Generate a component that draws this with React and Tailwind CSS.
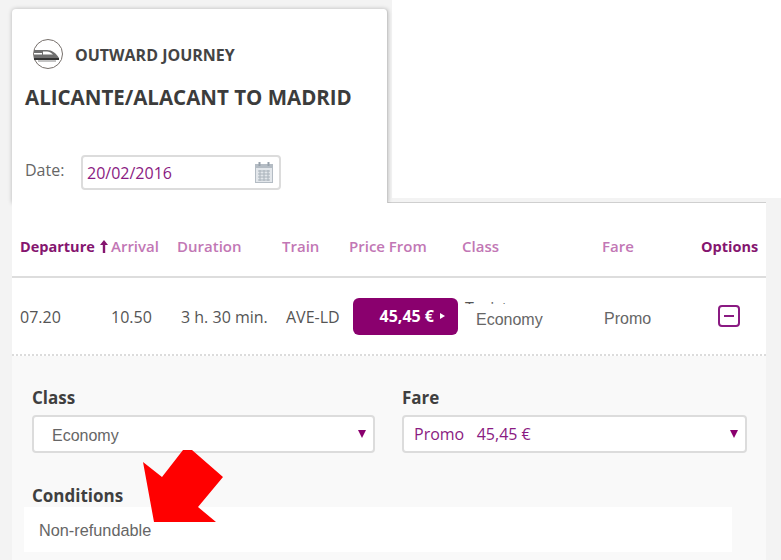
import React from "react";

const HEAD = "text-[15px] font-semibold text-[#c277b5]";
const ROW = "text-[16px] text-[#555] mt-[2px]";
const LABEL = "text-[17px] font-bold text-[#3f3f3f] leading-[20px]";
const COLS = "grid grid-cols-[91px_66px_105px_67px_113px_140px_99px_1fr] items-center pl-2 bg-white";

function TrainIcon() {
  return (
    <svg width="32" height="32" viewBox="0 0 32 32" fill="none">
      <circle cx="16" cy="16" r="14.5" stroke="#77706c" strokeWidth="1" />
      <path d="M2 12h13c5 0 9 3 12 8H2z" fill="#6f6f6f" />
      <path d="M11 13.5h4c2 0 4 1 6 3h-10z" fill="#fff" />
      <path d="M2 15h8v1.5H2z" fill="#fff" />
      <path d="M2 20h25v2H2z" fill="#333" />
      <path d="M6 23h18" stroke="#888" strokeWidth="1" />
    </svg>
  );
}

function CalendarIcon() {
  return (
    <svg width="18" height="21" viewBox="0 0 18 21">
      <rect x="0.5" y="2.5" width="17" height="18" fill="#e3e7eb" stroke="#b4bcc4" />
      <rect x="0" y="2" width="18" height="4" fill="#b4bcc4" />
      <rect x="3.5" y="0" width="2" height="4" fill="#98a2ac" />
      <rect x="12.5" y="0" width="2" height="4" fill="#98a2ac" />
      <path d="M3 9h12M3 12h12M3 15h12M3 18h12M5 8v11M9 8v11M13 8v11" stroke="#a9b2ba" strokeWidth="1" />
    </svg>
  );
}

function SortArrow() {
  return (
    <svg width="8" height="13" viewBox="0 0 8 13" fill="#85156f">
      <path d="M4 0L8 5H5.2V13H2.8V5H0z" />
    </svg>
  );
}

function SelectCaret() {
  return <span className="w-0 h-0 border-x-[4px] border-x-transparent border-t-[8px] border-t-[#8a006e]" />;
}

export default function App() {
  return (
    <div className="relative w-[781px] h-[560px] overflow-hidden bg-[#f3f3f3] font-['Open_Sans',sans-serif]">
      <div className="flex h-[203px]">
        <div className="relative z-10 w-[376px] h-[194px] ml-3 mt-[9px] bg-white rounded-t-[4px] shadow-[0_0_4px_rgba(0,0,0,0.25)] border-r border-[#c9c9c9] pl-[13px] pt-[29px]">
          <div className="flex items-center h-8 pl-[7px] gap-[12px]">
            <TrainIcon />
            <span className="text-[16px] font-bold text-[#444] -ml-px mt-[2px]">OUTWARD JOURNEY</span>
          </div>
          <h1 className="mt-[14px] text-[20.5px] font-bold text-[#3c3c3c] leading-[26px]">ALICANTE/ALACANT TO MADRID</h1>
          <div className="flex items-center mt-[45px]">
            <span className="text-[16px] text-[#666] w-[56px] -mt-[6px]">Date:</span>
            <div className="flex items-center justify-between w-[200px] h-[35px] bg-white rounded-[4px] border-2 border-[#dcdcdc] pl-[4px] pr-[6px]">
              <span className="text-[16px] text-[#8a1a82]">20/02/2016</span>
              <CalendarIcon />
            </div>
          </div>
        </div>
        <div className="flex-1 flex flex-col">
          <div className="ml-1 h-[198px] bg-white" />
          <div className="w-[378px] h-[5px] border-b border-[#cfcfcf]" />
        </div>
      </div>

      <div className="relative z-20 ml-3 w-[754px] h-[357px] bg-[#f9f9f9]">
        <div className={`${COLS} h-[75px] border-b-2 border-[#dddddd] pt-[14px]`}>
          <span className="flex items-center gap-[5px] text-[14.5px] font-bold text-[#85156f] whitespace-nowrap">
            Departure <SortArrow />
          </span>
          <span className={HEAD}>Arrival</span>
          <span className={HEAD}>Duration</span>
          <span className={HEAD}>Train</span>
          <span className={HEAD}>Price From</span>
          <span className={HEAD}>Class</span>
          <span className={HEAD}>Fare</span>
          <span className="text-[14.5px] font-bold text-[#85156f]">Options</span>
        </div>

        <div className={`${COLS} h-[78px] border-b-2 border-dotted border-[#dcdcdc]`}>
          <span className={ROW}>07.20</span>
          <span className={ROW}>10.50</span>
          <span className={`${ROW} pl-[4px] whitespace-nowrap`}>3 h. 30 min.</span>
          <span className={`${ROW} pl-[4px]`}>AVE-LD</span>
          <div className="flex items-center justify-end gap-[6px] w-[105px] h-[37px] ml-[4px] pr-[13px] bg-[#8a006e] rounded-[6px] text-white text-[16px] font-bold">
            <span>45,45 €</span>
            <span className="w-0 h-0 border-y-[3.5px] border-y-transparent border-l-[5px] border-l-white" />
          </div>
          <div className="relative h-full pt-[18px] pl-[3px] overflow-hidden">
            <span className="text-[16px] text-[#555]">Turista</span>
            <div className="absolute left-0 right-0 top-[26px] bottom-0 bg-white pl-[14px] pt-[4px] text-[16px] leading-[24px] text-[#666] font-['Liberation_Sans',sans-serif]">
              Economy
            </div>
          </div>
          <span className="text-[16px] text-[#666] font-['Liberation_Sans',sans-serif] pl-[2px] mt-[6px]">Promo</span>
          <div className="pl-[18px]">
            <div className="flex items-center justify-center w-[22px] h-[22px] -ml-px rounded-[4px] border-2 border-[#8a1a82]">
              <span className="w-[10px] h-[2px] bg-[#8a1a82]" />
            </div>
          </div>
        </div>

        <div className="grid grid-cols-[343px_345px] gap-x-[27px] pl-5 pt-[32px]">
          <div>
            <div className={LABEL}>Class</div>
            <div className="flex items-center justify-between h-[38px] mt-[7px] pl-[18px] pr-[7px] bg-white rounded-[4px] border-2 border-[#dcdcdc]">
              <span className="text-[16px] text-[#666] font-['Liberation_Sans',sans-serif] mt-[3px]">Economy</span>
              <SelectCaret />
            </div>
          </div>
          <div>
            <div className={LABEL}>Fare</div>
            <div className="flex items-center justify-between h-[38px] mt-[7px] pl-[10px] pr-[7px] bg-white rounded-[4px] border-2 border-[#dcdcdc]">
              <span className="text-[16px] text-[#8a1a82] whitespace-pre">Promo   45,45 €</span>
              <SelectCaret />
            </div>
          </div>
        </div>

        <div className={`${LABEL} ml-5 mt-[33px]`}>Conditions</div>
        <div className="ml-3 mt-px w-[708px] h-[45px] bg-white pl-[15px] pt-[11px] text-[16.3px] leading-[24px] text-[#666] font-['Liberation_Sans',sans-serif]">
          Non-refundable
        </div>
      </div>

      <svg className="absolute z-30 left-[143px] top-[450px]" width="81" height="73" viewBox="0 0 81 73">
        <polygon points="0,12 19,27 40,0 49,0 80,27 55,57 73,72 11,72" fill="#ff0000" />
      </svg>
    </div>
  );
}
